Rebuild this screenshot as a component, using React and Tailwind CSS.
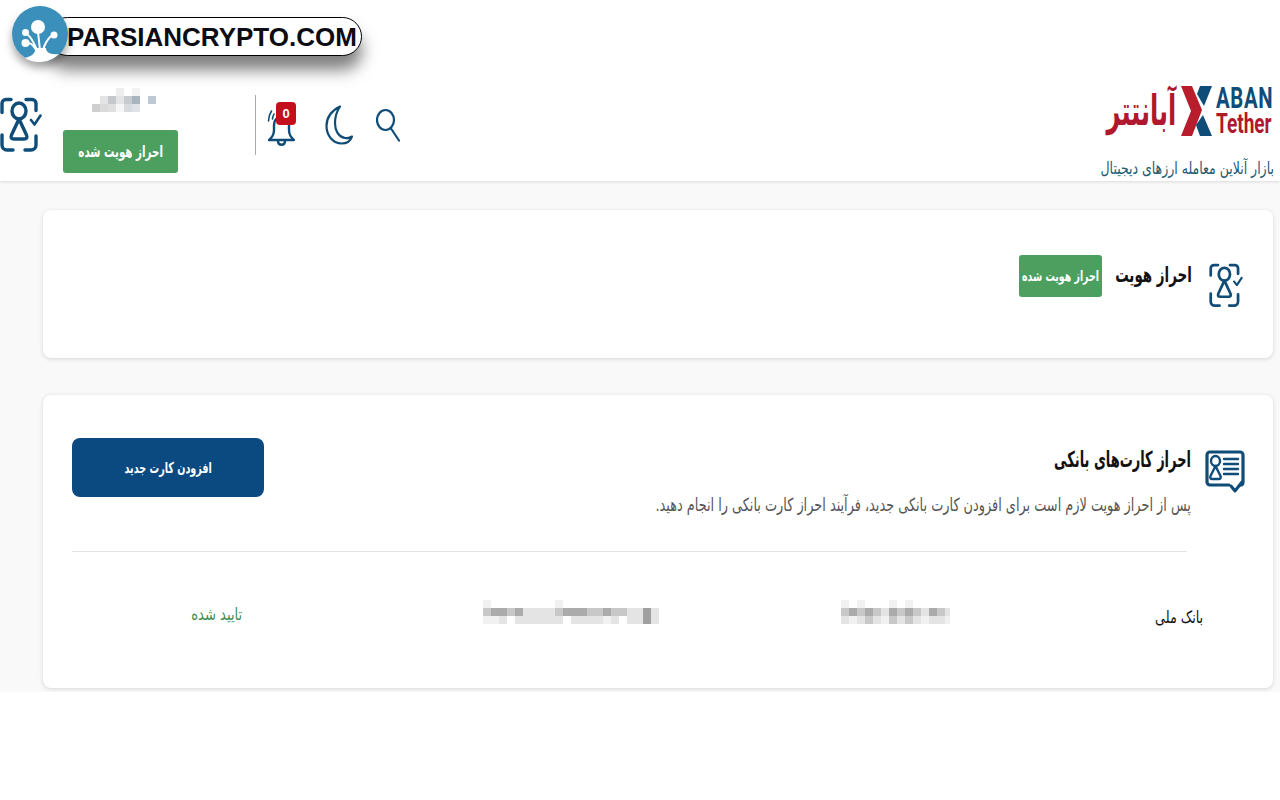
const fa = "font-['DejaVu_Sans',sans-serif] whitespace-nowrap";

function ScanIcon({ className }) {
  return (
    <svg viewBox="0 0 42 56" fill="none" stroke="#0f4c78" strokeWidth="3.400" strokeLinecap="round" strokeLinejoin="round" className={className}>
      <path d="M11 2.500H6a4 4 0 0 0-4 4v9" />
      <path d="M26 2.500h6a4 4 0 0 1 4 4v7" />
      <path d="M2 38v10a5 5 0 0 0 5 5h6" />
      <path d="M36 39v9a5 5 0 0 1-5 5h-6" />
      <ellipse cx="19" cy="14" rx="7" ry="8" />
      <path d="M19 22L11.500 38q-1.500 4 2.500 4h10q4 0 2.500-4z" />
      <path d="M31 23l3.500 4.500 6-9" strokeWidth="2.600" />
    </svg>
  );
}

function CardIcon({ className }) {
  return (
    <svg viewBox="0 0 40 44" fill="none" stroke="#0f4c78" strokeLinecap="round" strokeLinejoin="round" className={className}>
      <path d="M24 35H5a3 3 0 0 1-3-3V5a3 3 0 0 1 3-3h30a3 3 0 0 1 3 3v27a3 3 0 0 1-2 3" strokeWidth="3.200" />
      <ellipse cx="10.500" cy="11" rx="4.500" ry="5" strokeWidth="2.400" />
      <path d="M10.500 16L5.500 26q-1 3 2 3h6q3 0 2-3z" strokeWidth="2.400" />
      <path d="M19 9h14M19 14h14M19 19h14M19 24h14" strokeWidth="2.400" />
      <path d="M26 36l4 5 7-9" strokeWidth="3" />
    </svg>
  );
}

function Tree() {
  return (
    <svg viewBox="0 0 56 56" className="w-full h-full">
      <circle cx="28" cy="28" r="28" fill="#3a8fbb" />
      <path d="M23 42H34C34 46 38 49 47 48A28 28 0 0 1 13 52C20 50 24 47 23 42z" fill="#fff" />
      <path d="M26 26L28 44M16 29C20 32 22 37 25 44M17 37C20 38 23 41 25 46M39 30C36 33 33 37 31 44" stroke="#fff" strokeWidth="2" fill="none" />
      <circle cx="26" cy="21" r="7" fill="#fff" />
      <circle cx="13.500" cy="26.500" r="3.500" fill="#fff" />
      <circle cx="13.500" cy="37" r="4" fill="#fff" />
      <circle cx="42" cy="29" r="3.500" fill="#fff" />
    </svg>
  );
}

function Blur({ w, h, rows, className }) {
  const cell = 8;
  return (
    <svg width={w} height={h} viewBox={`0 0 ${w} ${h}`} className={className}>
      {rows.map((row, r) =>
        row.map((c, i) => (
          <rect key={`${r}-${i}`} x={i * cell} y={r * cell} width={cell} height={cell} fill={c} />
        ))
      )}
    </svg>
  );
}

const nameBlur = [
  ["#fff", "#fff", "#fff", "#eee", "#fff", "#f2f2f2", "#fff", "#fff", "#fff"],
  ["#fff", "#e4e4e4", "#c4c8cc", "#e4e4e4", "#c8ccd0", "#a8b4be", "#fff", "#bcc8d2", "#fff"],
  ["#cfcfcf", "#dadada", "#e0e0e0", "#f6f6f6", "#d8dade", "#dfe2e6", "#fff", "#fff", "#fff"],
];

const a = "#e4e4e4", b = "#c8c8c8", c = "#ababab", d = "#f1f1f1", e = "#a0a0a0";
const cardBlur = [
  [d, "#fff", d, "#fff", "#fff", "#fff", d, "#fff", d, "#fff", "#fff", "#fff", "#fff", "#fff"],
  [b, c, b, c, b, a, c, b, c, b, a, c, b, a],
  [a, d, a, b, a, d, b, a, b, a, d, a, a, d],
];
const numBlur = [
  [d, "#fff", "#fff", "#fff", "#fff", "#fff", "#fff", "#fff", "#fff", d, "#fff", "#fff", "#fff", "#fff", "#fff", "#fff", "#fff", "#fff", "#fff", "#fff", "#fff", "#fff"],
  [b, c, c, b, c, a, a, a, a, b, c, c, c, b, b, c, b, b, a, a, e, a],
  [d, d, a, "#fff", a, a, a, a, a, a, "#fff", a, a, a, a, d, a, "#fff", a, a, e, a],
];

export default function App() {
  return (
    <div className="relative w-[1280px] h-[800px] bg-white overflow-hidden flex flex-col">
      {/* watermark */}
      <div className="absolute z-10 left-[48px] top-[17px] w-[314px] h-[39px] rounded-full bg-white border border-black shadow-[0_14px_16px_rgba(0,0,0,0.5)] flex items-center pl-[18px]">
        <span className="font-['Liberation_Sans',sans-serif] font-bold text-[26px] leading-none text-[#0c0c14] whitespace-nowrap">PARSIANCRYPTO.COM</span>
      </div>
      <div className="absolute z-10 left-[12px] top-[6px] w-[56px] h-[56px] rounded-full shadow-[0_6px_8px_rgba(0,0,0,0.35)]">
        <Tree />
      </div>

      {/* header */}
      <header className="h-[181px] shrink-0 flex justify-between pt-[85px] bg-white shadow-[0_1px_3px_rgba(0,0,0,0.12)] relative">
        <div className="flex items-start">
          <ScanIcon className="w-[42px] h-[56px] mt-[12px]" />
          <div className="ml-[21px] w-[115px] flex flex-col items-center mt-[3px]">
            <Blur w={72} h={24} rows={nameBlur} className="ml-[15px]" />
            <div className={`mt-[18px] w-[115px] h-[43px] rounded-[3px] bg-[#4c9f5e] text-white flex items-center justify-center ${fa}`} dir="rtl">
              <span className="text-[16px] font-bold scale-x-[0.645]">احراز هویت شده</span>
            </div>
          </div>
          <div className="ml-[77px] mt-[10px] w-px h-[60px] bg-[#a9a9a9]" />
          <div className="relative ml-[11px] mt-[24px] w-[29px] h-[38px]">
            <svg viewBox="0 0 29 38" fill="none" stroke="#0f4c78" strokeWidth="2.400" strokeLinecap="round" strokeLinejoin="round" className="w-full h-full">
              <path d="M2 31c3-3 5-5 5-10v-5c0-5 3-8 7.500-8S22 11 22 16v5c0 5 2 7 5 10z" />
              <path d="M11 32c0 5 7 5 7 0" />
              <path d="M1.500 12c0-4 1-7 3-10" strokeWidth="1.600" />
              <path d="M5.500 10c0-2 .5-3 1.500-5" strokeWidth="1.600" />
            </svg>
            <span className="absolute left-[9px] top-[-7px] w-[20px] h-[23px] rounded-[4px] bg-[#c40f1d] text-white text-[13px] font-bold flex items-center justify-center font-['Liberation_Sans',sans-serif]">0</span>
          </div>
          <svg viewBox="0 0 28 40" fill="none" stroke="#0f4c78" strokeWidth="2.200" strokeLinejoin="round" className="ml-[29px] mt-[20px] w-[28px] h-[40px]">
            <path d="M15 1.500C6 6 1.500 13 1.500 21c0 10 7 17.500 15 17.500 5 0 9-2.500 10.500-7-2 1.500-4.500 2-7 1.500C13 31.500 10 25 10 18c0-6 2-12 5-16.500z" />
          </svg>
          <svg viewBox="0 0 24 34" fill="none" stroke="#0f4c78" strokeWidth="2.200" strokeLinecap="round" className="ml-[23px] mt-[23px] w-[24px] h-[34px]">
            <ellipse cx="9.500" cy="12" rx="8.500" ry="10" />
            <path d="M15 20.500l8 12" />
          </svg>
        </div>

        <div className="flex flex-col items-end pr-[6px]">
          <div className="flex items-center h-[52px] mr-[3px]">
            <span className={`text-[#b0182d] text-[42px] leading-none font-bold mr-[5px] scale-x-[0.57] origin-right ${fa}`} dir="rtl">آبانتتر</span>
            <svg viewBox="0 0 31 50" className="w-[31px] h-[50px]">
              <path d="M0 0H11L21 24 11 50H0L10 25z" fill="#b81d2e" />
              <path d="M19 0H31L23 20 16 8z" fill="#0f4c78" />
              <path d="M22 29L31 50H19L15 39z" fill="#0f4c78" />
            </svg>
            <div className="ml-[4px] w-[55px] flex flex-col items-start font-['Roboto',sans-serif] font-bold leading-none">
              <span className="text-[#0f4c78] text-[29px] leading-[26px] tracking-[1px] scale-x-[0.7] origin-left">ABAN</span>
              <span className="text-[#b0182d] text-[28px] leading-[26px] scale-x-[0.68] origin-left">Tether</span>
            </div>
          </div>
          <div className={`mt-[21px] text-[#205a72] text-[17px] leading-[20px] scale-x-[0.735] origin-right ${fa}`} dir="rtl">بازار آنلاین معامله ارزهای دیجیتال</div>
        </div>
      </header>

      {/* main */}
      <main className="h-[511px] shrink-0 bg-[#f9f9f9] pl-[43px] pr-[7px] pt-[29px] flex flex-col gap-[37px]">
        <section className="h-[148px] rounded-[8px] bg-white shadow-[0_1px_4px_rgba(0,0,0,0.15)] flex justify-end items-start pr-[30px]">
          <div className={`mt-[45px] w-[83px] h-[42px] rounded-[3px] bg-[#4c9f5e] text-white flex items-center justify-center ${fa}`} dir="rtl">
            <span className="text-[14px] font-bold scale-x-[0.67]">احراز هویت شده</span>
          </div>
          <div className={`ml-[14px] mt-[52px] w-[76px] text-[21px] leading-[26px] font-bold text-[#111] ${fa}`} dir="rtl">
            <span className="inline-block scale-x-[0.64] origin-right">احراز هویت</span>
          </div>
          <ScanIcon className="ml-[17px] mt-[53px] w-[34px] h-[45px]" />
        </section>

        <section className="h-[293px] rounded-[8px] bg-white shadow-[0_1px_4px_rgba(0,0,0,0.15)] pl-[29px] pr-[28px] pt-[43px] flex flex-col">
          <div className="flex justify-between items-start">
            <button className={`w-[192px] h-[59px] rounded-[8px] bg-[#0b4a80] text-white ${fa}`} dir="rtl">
              <span className="inline-block text-[15px] font-bold scale-x-[0.64]">افزودن کارت جدید</span>
            </button>
            <div className="flex items-start">
              <div className="flex flex-col items-start mr-[14px]" dir="rtl">
                <div className={`text-[22px] leading-[28px] font-bold text-[#111] mt-[8px] scale-x-[0.59] origin-right ${fa}`}>احراز کارت‌های بانکی</div>
                <div className={`text-[18px] leading-[24px] text-[#555] mt-[19px] scale-x-[0.714] origin-right ${fa}`}>پس از احراز هویت لازم است برای افزودن کارت بانکی جدید، فرآیند احراز کارت بانکی را انجام دهید.</div>
              </div>
              <CardIcon className="w-[40px] h-[44px] mt-[12px]" />
            </div>
          </div>
          <div className="mt-[34px] mr-[58px] h-px bg-[#e3e3e3]" />
          <div className="mt-[49px] flex items-center h-[28px]">
            <div className={`ml-[119px] w-[51px] text-[#3f8f55] text-[17px] ${fa}`} dir="rtl">
              <span className="inline-block scale-x-[0.77] origin-right">تایید شده</span>
            </div>
            <Blur w={176} h={24} rows={numBlur} className="ml-[241px] mb-[6px]" />
            <Blur w={109} h={24} rows={cardBlur} className="ml-[182px] mb-[6px]" />
            <div className={`ml-auto mr-[42px] mt-[5px] text-[#111] text-[17px] scale-x-[0.75] origin-right ${fa}`} dir="rtl">بانک ملی</div>
          </div>
        </section>
      </main>
      <div className="flex-1 bg-white" />
    </div>
  );
}
